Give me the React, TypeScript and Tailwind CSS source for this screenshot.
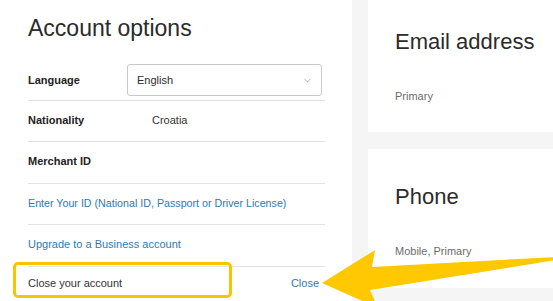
import { ChevronDown } from 'lucide-react'

const font = { fontFamily: '"Liberation Sans", Arial, sans-serif' }

const Row = ({ h, children, last }: { h: string; children: React.ReactNode; last?: boolean }) => (
  <div className={`relative flex items-center pb-[2px] ${h} ${last ? '' : 'border-b border-[#e3e3e3]'}`}>
    {children}
  </div>
)

const InfoCard = ({ title, sub, className }: { title: string; sub: string; className: string }) => (
  <div className={`bg-white pt-[37px] pl-[27px] ${className}`}>
    <h2 className="text-[22px] leading-[22px] font-normal text-[#2b2b2b]">{title}</h2>
    <p className="mt-[38px] text-[11px] leading-[11px] text-[#6c6c6c]">{sub}</p>
  </div>
)

export default function App() {
  return (
    <div className="relative flex h-[301px] w-[553px] overflow-hidden bg-[#f5f5f5]" style={font}>
      <div className="w-[352px] shrink-0 bg-white pt-[17px] pl-[28px] pr-[27px]">
        <h1 className="mb-[24px] text-[23px] leading-[23px] font-normal text-[#2b2b2b]">Account options</h1>

        <div className="flex h-[37px] items-start border-b border-[#e3e3e3] pb-[4px]">
          <span className="w-[99px] text-[11px] leading-[32px] font-bold text-[#222]">Language</span>
          <div className="flex h-[32px] w-[195px] items-center justify-between rounded-[3px] border border-[#c9c9c9] pr-[8px] pl-[9px]">
            <span className="text-[11px] text-[#2b2b2b]">English</span>
            <ChevronDown className="size-[11px] text-[#888]" strokeWidth={1.25} />
          </div>
        </div>

        <Row h="h-[41px]">
          <span className="w-[124px] text-[11px] font-bold text-[#222]">Nationality</span>
          <span className="text-[11px] text-[#333]">Croatia</span>
        </Row>
        <Row h="h-[42px]">
          <span className="text-[11px] font-bold text-[#222]">Merchant ID</span>
        </Row>
        <Row h="h-[41px]">
          <span className="text-[10.7px] text-[#2f79b2]">Enter Your ID (National ID, Passport or Driver License)</span>
        </Row>
        <Row h="h-[42px]">
          <span className="text-[11px] text-[#2f79b2]">Upgrade to a Business account</span>
        </Row>
        <Row h="h-[35px]" last>
          <div className="flex w-full items-center justify-between pr-[6px]">
            <span className="text-[11px] text-[#333]">Close your account</span>
            <span className="text-[11px] text-[#2f79b2]">Close</span>
          </div>
          <div className="absolute top-[-5px] left-[-15px] h-[36px] w-[219px] rounded-[5px] border-[3px] border-[#f7c600]" />
        </Row>
      </div>

      <div className="ml-[16px] flex flex-1 flex-col gap-[17px]">
        <InfoCard title="Email address" sub="Primary" className="-mt-[6px] h-[138px]" />
        <InfoCard title="Phone" sub="Mobile, Primary" className="h-[139px]" />
      </div>

      <svg className="pointer-events-none absolute inset-0" width="553" height="301" viewBox="0 0 553 301">
        <polygon
          points="322,283 375,250 372,267 556,257 556,260 370,290 378,308"
          fill="#ffc800"
        />
      </svg>
    </div>
  )
}
